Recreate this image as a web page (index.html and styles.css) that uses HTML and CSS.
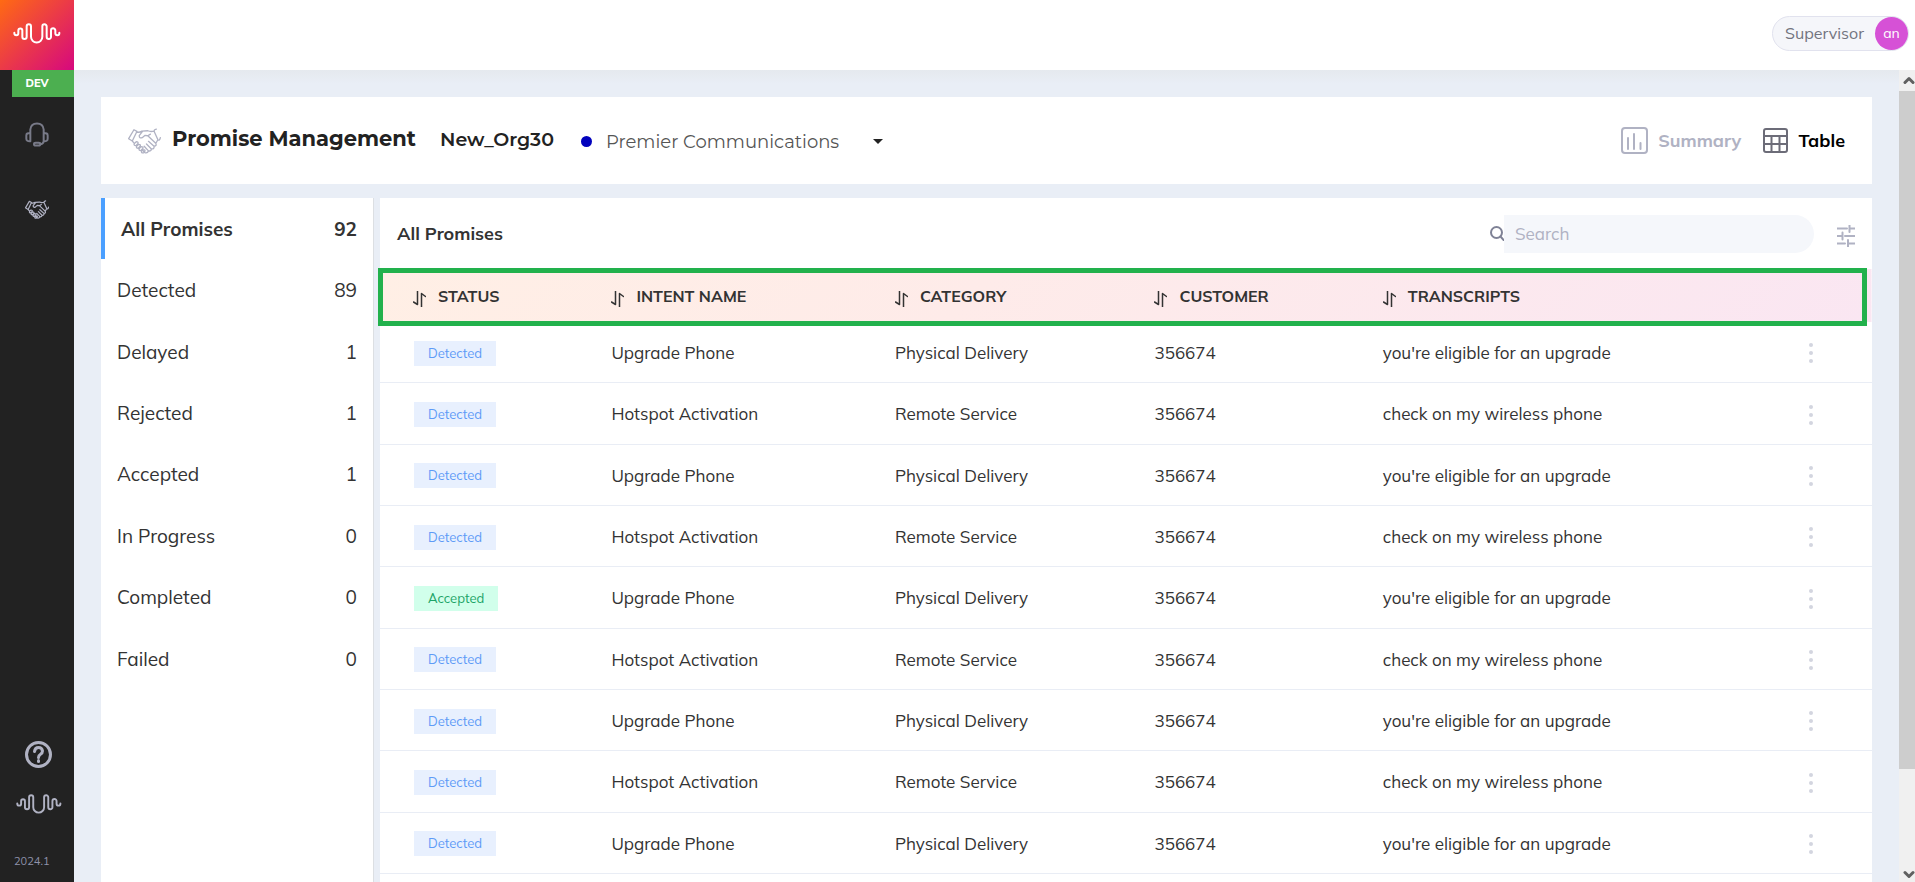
FILE: index.html
```
<!DOCTYPE html>
<html lang="en">
<head>
<meta charset="utf-8">
<title>Promise Management</title>
<link rel="stylesheet" href="styles.css">
</head>
<body>
<svg class="defs" aria-hidden="true">
  <symbol id="wave" viewBox="38 68 144 62"><path d="M42 97v1a6 6 0 0 0 12 0v-8a6 6 0 0 1 12 0v19a6.500 6.500 0 0 0 13 0V78a6.500 6.500 0 0 1 13 0v31a17 17 0 0 0 34 0V78a6.500 6.500 0 0 1 13 0v31a6.500 6.500 0 0 0 13 0V90a6.500 6.500 0 0 1 13 0v8a6 6 0 0 0 12 0v-1"/></symbol>
  <symbol id="shake" viewBox="0 0 100 76"><path d="M18 4l9 5-14 29-11-7zM27 11q8 2 15-3l18-1q9 4 19 1M44 9L34 22q0 9 9 6l8-7 9 1 8-5M60 22l24 23q4 8-5 9L62 39M79 54q1 9-8 8L56 47M71 62q-1 8-9 6L49 54M62 68q-3 8-11 5l-4-4M13 38l6 7M19 46l6-6q7 0 5 6l-6 6q-7 0-5-6zM26 54l6-6q7 0 5 6l-6 6q-7 0-5-6zM34 61l6-6q7 0 5 6l-6 6q-7 0-5-6zM41 69l5-5q7 0 5 5l-4 5q-7 1-6-5zM86 2q-9 2-6 9l10 22q6 6 8-5M85 44l5-9"/></symbol>
  <symbol id="sort" viewBox="0 0 13 16"><path d="M4.500 0v13.500L.5 11M8.500 16V2.500l4 3"/></symbol>
  <symbol id="dots" viewBox="0 0 4 20"><circle cx="2" cy="2" r="2"/><circle cx="2" cy="10" r="2"/><circle cx="2" cy="18" r="2"/></symbol>
</svg>
<div class="app">
  <nav class="rail" aria-label="Main">
    <a class="logo" href="#" aria-label="Home"><svg class="ico-logo"><use href="#wave"/></svg></a>
    <span class="env">DEV</span>
    <a class="rail-link" href="#" aria-label="Agents"><svg class="ico-headset" viewBox="0 0 72 74"><path d="M16 34V22Q18 4 36 4t20 18v36q-2 8-10 8M16 34q-12-3-12 6v10q0 8 12 7zM56 34q12-3 12 6v10q0 8-12 7M32 62h9q5 0 5 4t-5 4h-9q-5 0-5-4t5-4z"/></svg></a>
    <a class="rail-link rail-promise" href="#" aria-label="Promises"><svg class="ico-shake-sm"><use href="#shake"/></svg></a>
    <div class="rail-foot">
      <a class="rail-link" href="#" aria-label="Help"><svg class="ico-help" viewBox="0 0 27 27"><circle cx="13.500" cy="13.500" r="12"/><path d="M9.500 10.500q.5-4 4-4t4 3.500q0 2-2 3.200t-2 3.300"/><path d="M13.500 19.500v1"/></svg></a>
      <a class="rail-link" href="#" aria-label="About"><svg class="ico-wave"><use href="#wave"/></svg></a>
      <span class="version">2024.1</span>
    </div>
  </nav>
  <div class="main">
    <header class="topbar">
      <button class="user" type="button"><span>Supervisor</span><span class="avatar">an</span></button>
    </header>
    <div class="viewport">
      <main class="content">
        <section class="card titlebar">
          <svg class="ico-shake"><use href="#shake"/></svg>
          <h1>Promise Management</h1>
          <span class="org">New_Org30</span>
          <button class="account" type="button"><span class="dot"></span><span>Premier Communications</span><span class="caret"></span></button>
          <div class="views">
            <button class="view" type="button"><svg class="ico-chart" viewBox="0 0 27 27"><rect x="1" y="1" width="25" height="25" rx="3"/><path d="M7 11v11M13 7v15M19.500 16v6"/></svg>Summary</button>
            <button class="view view-on" type="button"><svg class="ico-table" viewBox="0 0 25 25"><rect x="1" y="1" width="23" height="23" rx="2"/><path d="M1 8h23M1 16h23M8.500 8v16M16.500 8v16"/></svg>Table</button>
          </div>
        </section>
        <div class="columns">
          <nav class="filters" aria-label="Promise status">
            <a class="filter filter-on" href="#"><span>All Promises</span><span>92</span></a>
            <a class="filter" href="#"><span>Detected</span><span>89</span></a>
            <a class="filter" href="#"><span>Delayed</span><span>1</span></a>
            <a class="filter" href="#"><span>Rejected</span><span>1</span></a>
            <a class="filter" href="#"><span>Accepted</span><span>1</span></a>
            <a class="filter" href="#"><span>In Progress</span><span>0</span></a>
            <a class="filter" href="#"><span>Completed</span><span>0</span></a>
            <a class="filter" href="#"><span>Failed</span><span>0</span></a>
          </nav>
          <section class="panel">
            <div class="panel-head">
              <h2>All Promises</h2>
              <label class="search"><svg class="ico-search" viewBox="0 0 14 15"><circle cx="6.500" cy="6.500" r="5.500"/><path d="M10.500 10.500l3.500 4"/></svg><input type="text" placeholder="Search" aria-label="Search"></label>
              <button class="tune" type="button" aria-label="Filter"><svg class="ico-tune" viewBox="0 0 18 22"><path d="M0 3.500h10M12.500 0v7M12.500 3.500H18M0 11h5.500M5.500 7.500v7M8 11h10M0 18.500h8M11 15v7M11 18.500h7"/></svg></button>
            </div>
            <div class="table-wrap">
              <table>
                <colgroup><col class="c-status"><col class="c-intent"><col class="c-category"><col class="c-customer"><col class="c-transcript"><col class="c-menu"></colgroup>
                <thead><tr>
                  <th><button type="button"><svg class="ico-sort"><use href="#sort"/></svg>STATUS</button></th>
                  <th><button type="button"><svg class="ico-sort"><use href="#sort"/></svg>INTENT NAME</button></th>
                  <th><button type="button"><svg class="ico-sort"><use href="#sort"/></svg>CATEGORY</button></th>
                  <th><button type="button"><svg class="ico-sort"><use href="#sort"/></svg>CUSTOMER</button></th>
                  <th><button type="button"><svg class="ico-sort"><use href="#sort"/></svg>TRANSCRIPTS</button></th>
                  <th></th>
                </tr></thead>
                <tbody>
                  <tr><td><span class="badge">Detected</span></td><td>Upgrade Phone</td><td>Physical Delivery</td><td>356674</td><td>you're eligible for an upgrade</td><td><button class="more" type="button" aria-label="More"><svg class="ico-dots"><use href="#dots"/></svg></button></td></tr>
                  <tr><td><span class="badge">Detected</span></td><td>Hotspot Activation</td><td>Remote Service</td><td>356674</td><td>check on my wireless phone</td><td><button class="more" type="button" aria-label="More"><svg class="ico-dots"><use href="#dots"/></svg></button></td></tr>
                  <tr><td><span class="badge">Detected</span></td><td>Upgrade Phone</td><td>Physical Delivery</td><td>356674</td><td>you're eligible for an upgrade</td><td><button class="more" type="button" aria-label="More"><svg class="ico-dots"><use href="#dots"/></svg></button></td></tr>
                  <tr><td><span class="badge">Detected</span></td><td>Hotspot Activation</td><td>Remote Service</td><td>356674</td><td>check on my wireless phone</td><td><button class="more" type="button" aria-label="More"><svg class="ico-dots"><use href="#dots"/></svg></button></td></tr>
                  <tr><td><span class="badge badge-ok">Accepted</span></td><td>Upgrade Phone</td><td>Physical Delivery</td><td>356674</td><td>you're eligible for an upgrade</td><td><button class="more" type="button" aria-label="More"><svg class="ico-dots"><use href="#dots"/></svg></button></td></tr>
                  <tr><td><span class="badge">Detected</span></td><td>Hotspot Activation</td><td>Remote Service</td><td>356674</td><td>check on my wireless phone</td><td><button class="more" type="button" aria-label="More"><svg class="ico-dots"><use href="#dots"/></svg></button></td></tr>
                  <tr><td><span class="badge">Detected</span></td><td>Upgrade Phone</td><td>Physical Delivery</td><td>356674</td><td>you're eligible for an upgrade</td><td><button class="more" type="button" aria-label="More"><svg class="ico-dots"><use href="#dots"/></svg></button></td></tr>
                  <tr><td><span class="badge">Detected</span></td><td>Hotspot Activation</td><td>Remote Service</td><td>356674</td><td>check on my wireless phone</td><td><button class="more" type="button" aria-label="More"><svg class="ico-dots"><use href="#dots"/></svg></button></td></tr>
                  <tr><td><span class="badge">Detected</span></td><td>Upgrade Phone</td><td>Physical Delivery</td><td>356674</td><td>you're eligible for an upgrade</td><td><button class="more" type="button" aria-label="More"><svg class="ico-dots"><use href="#dots"/></svg></button></td></tr>
                </tbody>
              </table>
              <div class="highlight"></div>
            </div>
          </section>
        </div>
      </main>
      <div class="scrollbar" aria-hidden="true">
        <svg class="ico-arrow" viewBox="0 0 16 20"><path d="M6 12l4-4 4 4"/></svg>
        <div class="track"><div class="thumb"></div></div>
        <svg class="ico-arrow" viewBox="0 0 16 20"><path d="M6 11l4 4 4-4"/></svg>
      </div>
    </div>
  </div>
</div>
</body>
</html>
```

FILE: styles.css
```
* { box-sizing: border-box; }
body { margin: 0; font-family: Mulish, Lato, sans-serif; font-size: 17px; color: #333; background: #fff; }
button { border: 0; padding: 0; background: none; font: inherit; color: inherit; cursor: pointer; }
a { color: inherit; text-decoration: none; }
h1, h2 { margin: 0; }
svg { display: block; fill: none; stroke-linecap: round; stroke-linejoin: round; flex: none; }
.defs { position: absolute; width: 0; height: 0; }

.app { display: flex; height: 100vh; overflow: hidden; }

.rail { width: 74px; flex: none; display: flex; flex-direction: column; background: #222; color: #b0b2c3; }
.logo { height: 70px; display: flex; align-items: center; justify-content: center; padding-bottom: 4px; background: linear-gradient(135deg, #ff6a13, #d6087f); }
.ico-logo { width: 48px; height: 21px; stroke: #fff; stroke-width: 6; }
.env { margin-left: 12px; padding-right: 12px; line-height: 26px; padding-bottom: 1px; background: #4caf50; color: #fff; font-size: 11px; font-weight: 800; text-align: center; }
.rail-link { display: flex; justify-content: center; }
.ico-headset { width: 24px; height: 25px; margin-top: 25px; stroke: #787a88; stroke-width: 6; }
.rail-promise { margin-top: 53px; }
.ico-shake-sm { width: 24px; height: 19px; stroke: #b0b2c3; stroke-width: 5; }
.rail-foot { margin-top: auto; padding: 0 0 12px 3px; display: flex; flex-direction: column; gap: 26px; }
.ico-help { width: 27px; height: 27px; stroke: #b0b2c3; stroke-width: 3; }
.ico-wave { width: 46px; height: 20px; stroke: #b0b2c3; stroke-width: 6; }
.version { margin: 12px 0 0 11px; font-size: 11px; line-height: 18px; color: #8f92ab; }

.main { flex: 1; min-width: 0; display: flex; flex-direction: column; }
.topbar { height: 70px; flex: none; display: flex; align-items: center; justify-content: flex-end; padding: 0 6px 4px 0; background: #fff; }
.user { height: 35px; display: flex; align-items: center; gap: 11px; padding-left: 12px; border: 1px solid #e1e2ee; border-radius: 18px; background: #f5f6fa; color: #72747f; font-size: 16px; }
.avatar { width: 33px; height: 33px; border-radius: 50%; background: #d651d6; color: #fff; font-size: 14px; line-height: 32px; text-align: center; }

.viewport { flex: 1; min-height: 0; display: flex; background: linear-gradient(#e5e9ee, #e9eef6 14px); }
.content { flex: 1; min-width: 0; display: flex; flex-direction: column; gap: 14px; padding: 27px 27px 0; overflow: hidden; }
.card { background: #fff; }
.titlebar { display: flex; align-items: center; height: 87px; flex: none; padding: 0 27px; font-family: Montserrat, Inter, sans-serif; }
.ico-shake { width: 33px; height: 26px; stroke: #b0b2c3; stroke-width: 4; }
h1 { margin: 0 0 4px 11px; font-size: 21px; line-height: 30px; font-weight: 700; color: #222; }
.org { margin: 0 0 2px 24px; font-size: 19px; line-height: 28px; font-weight: 600; color: #222; }
.account { display: flex; align-items: center; margin: 2px 0 0 27px; font-size: 18px; line-height: 28px; color: #555; }
.dot { width: 11px; height: 11px; margin-right: 14px; border-radius: 50%; background: #0202bd; }
.caret { margin-left: 34px; border: 5px solid transparent; border-top-color: #222; border-bottom: 0; }
.views { display: flex; gap: 22px; margin-left: auto; font-family: Mulish, Lato, sans-serif; }
.view { display: flex; align-items: center; gap: 10px; font-size: 18px; font-weight: 700; color: #b0b2c3; }
.view-on { color: #000; }
.ico-chart { width: 27px; height: 27px; stroke: #b0b2c3; stroke-width: 2; }
.ico-table { width: 25px; height: 25px; stroke: #6c6c78; stroke-width: 2; }

.columns { flex: 1; min-height: 0; display: flex; gap: 6px; }
.filters { width: 273px; flex: none; background: #fff; border-right: 1px solid #dcdfe3; }
.filter { display: flex; justify-content: space-between; padding: 20px 16px 18px; font-size: 19px; line-height: 1.23; }
.filter-on { border-left: 4px solid #4a9fff; font-weight: 700; }

.panel { flex: 1; min-width: 0; background: #fff; }
.panel-head { display: flex; align-items: center; height: 71px; padding: 0 17px; }
h2 { font-size: 18px; font-weight: 700; }
.search { display: flex; align-items: center; margin-left: auto; }
.ico-search { width: 14px; height: 15px; stroke: #7f8296; stroke-width: 2; }
.search input { width: 310px; height: 38px; border: 0; padding: 0 11px; border-radius: 0 19px 19px 0; background: #f5f7fb; font: inherit; color: #333; outline: 0; }
.search input::placeholder { color: #b0b2c3; opacity: 1; }
.tune { margin: 4px 0 0 23px; }
.ico-tune { width: 18px; height: 22px; stroke: #b0b2c3; stroke-width: 2; }

.table-wrap { position: relative; }
table { width: 100%; table-layout: fixed; border-collapse: separate; border-spacing: 0; }
.c-status { width: 13.3%; }
.c-intent { width: 19%; }
.c-category { width: 17.4%; }
.c-customer { width: 15.3%; }
.c-transcript { width: 28.6%; }
thead { background: linear-gradient(135deg, #ffefe5, #feebe9 40%, #fae6f2); }
th { height: 53px; padding: 0 0 0 33px; text-align: left; font-size: 16px; font-weight: 700; }
th button { display: flex; align-items: center; gap: 12px; }
.ico-sort { width: 13px; height: 16px; margin-top: 7px; stroke: #333; stroke-width: 1.500; }
td { padding: 18px 0 16px 33px; border-bottom: 1px solid #e9edf5; line-height: 1.55; font-size: 17px; white-space: nowrap; }
.badge { display: block; width: fit-content; margin-left: 1px; padding: 0 14px; background: #e8f0fe; color: #5e9bf7; font-size: 13px; line-height: 25px; }
.badge-ok { background: #d1ffeb; color: #1ca467; }
.more { display: block; }
.ico-dots { width: 4px; height: 20px; fill: #d3d5df; }
.highlight { position: absolute; top: -1px; left: -2px; right: 5px; height: 58px; border: 5px solid #22b14c; pointer-events: none; }

.scrollbar { width: 16px; flex: none; display: flex; flex-direction: column; background: #f0f0f0; }
.ico-arrow { width: 16px; height: 21px; stroke: #606060; stroke-width: 3; }
.track { flex: 1; }
.thumb { height: 88%; background: #cdcdcd; }
```
